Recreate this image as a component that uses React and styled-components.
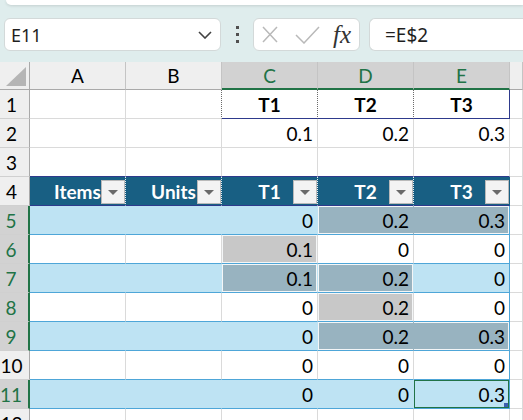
import styled, { createGlobalStyle } from "styled-components";

const Global = createGlobalStyle`
  html, body {
    margin: 0;
    height: 420px;
    overflow: hidden;
    background: #ffffff;
  }
`;

const GREEN = "#217346";
const NAVY = "#2e3a8c";
const BAND = "#bee3f3";
const TABLE_LINE = "#4ea6d8";
const HEAD = "#185f83";
const GRAY = "#c8c8c8";
const SLATE = "#98b3c0";
const GRID = "#dadada";

const Toolbar = styled.div`
  height: 62px;
  background: #dfeded;
  display: flex;
  flex-direction: column;
  box-sizing: border-box;
`;

const TopStrip = styled.div`
  height: 5px;
  margin-left: 6px;
  background: #ffffff;
  border-bottom-left-radius: 6px;
  box-shadow: 0 1px 3px rgba(0, 0, 0, 0.12);
`;

const FormulaRow = styled.div`
  display: flex;
  align-items: center;
  margin-top: 13px;
  height: 33px;
  padding-left: 4px;
  font-family: "Noto Sans", "Open Sans", sans-serif;
`;

const Box = styled.div`
  box-sizing: border-box;
  height: 33px;
  background: #ffffff;
  border: 1px solid #d3d9d9;
  border-radius: 6px;
  display: flex;
  align-items: center;
`;

const NameBox = styled(Box)`
  width: 217px;
  padding: 0 8px 0 6px;
  justify-content: space-between;
  font-size: 18px;
  color: #1f1f1f;
`;

const Dots = styled.div`
  width: 32px;
  display: flex;
  flex-direction: column;
  align-items: center;
  gap: 4px;

  span {
    width: 3px;
    height: 3px;
    background: #505050;
  }
`;

const FxBox = styled(Box)`
  width: 107px;
  margin-right: 9px;
  padding-left: 8px;
  gap: 17px;
`;

const Fx = styled.span`
  font-family: "Liberation Serif", "DejaVu Serif", serif;
  font-style: italic;
  font-size: 25px;
  color: #333333;
  margin-left: -4px;
  line-height: 1;
`;

const FormulaBox = styled(Box)`
  flex: 1;
  border-right: none;
  border-top-right-radius: 0;
  border-bottom-right-radius: 0;
  padding-left: 15px;
  font-size: 19px;
  color: #1f1f1f;
`;

const Sheet = styled.div`
  font-family: Lato, "Noto Sans", sans-serif;
  font-size: 19px;
`;

const Row = styled.div`
  display: grid;
  grid-template-columns: 30px repeat(5, 96px) 1fr;
  height: ${(p) => (p.$head ? 28 : 29)}px;
`;

const Corner = styled.div`
  box-sizing: border-box;
  background: #efefef;
  border-right: 1px solid #a9a9a9;
  border-bottom: 1px solid #a9a9a9;
  position: relative;

  &::after {
    content: "";
    position: absolute;
    right: 3px;
    bottom: 3px;
    border-left: 20px solid transparent;
    border-bottom: 19px solid #b5b5b5;
  }
`;

const ColHead = styled.div`
  box-sizing: border-box;
  background: ${(p) => (p.$on ? "#d2d2d2" : "#efefef")};
  color: ${(p) => (p.$on ? GREEN : "#000000")};
  border-right: 1px solid #c4c4c4;
  border-bottom: ${(p) => (p.$on ? `2px solid ${GREEN}` : "1px solid #a9a9a9")};
  display: flex;
  align-items: center;
  justify-content: center;
`;

const RowHead = styled.div`
  box-sizing: border-box;
  background: ${(p) => (p.$on ? "#d2d2d2" : "#efefef")};
  color: ${(p) => (p.$on ? GREEN : "#000000")};
  border-right: ${(p) => (p.$on ? `2px solid ${GREEN}` : "1px solid #a9a9a9")};
  border-bottom: 1px solid #d0d0d0;
  display: flex;
  align-items: center;
  justify-content: center;
  padding-right: 6px;
`;

const Cell = styled.div`
  box-sizing: border-box;
  position: relative;
  overflow: hidden;
  white-space: nowrap;
  background: ${(p) => p.$bg || "#ffffff"};
  border-right: 1px ${(p) => p.$rs || "solid"} ${(p) => p.$r || GRID};
  border-bottom: 1px solid ${(p) => p.$b || GRID};
  box-shadow: ${(p) => p.$ring || "none"};
  color: ${(p) => (p.$white ? "#ffffff" : "#000000")};
  font-weight: ${(p) => (p.$bold ? 700 : 400)};
  display: flex;
  align-items: center;
  justify-content: ${(p) => (p.$center ? "center" : "flex-end")};
  padding: 0 4px;
`;

const Filter = styled.div`
  position: absolute;
  top: 3px;
  right: 0;
  width: 24px;
  height: 24px;
  box-sizing: border-box;
  background: #f3f3f3;
  border: 1px solid #b9b9b9;
  display: flex;
  align-items: center;
  justify-content: center;

  &::after {
    content: "";
    border-left: 5px solid transparent;
    border-right: 5px solid transparent;
    border-top: 5px solid #6a6a6a;
  }
`;

const Handle = styled.div`
  position: absolute;
  right: 1px;
  bottom: 1px;
  width: 4px;
  height: 4px;
  background: #3d5fae;
`;

const W = "#f4f6f7";
const ring = {
  all: `inset 0 0 0 1px ${W}`,
  left: `inset 1px 0 0 ${W}, inset 0 1px 0 ${W}, inset 0 -1px 0 ${W}`,
  right: `inset -1px 0 0 ${W}, inset 0 1px 0 ${W}, inset 0 -1px 0 ${W}`,
  active: `inset 0 0 0 1px ${GREEN}`,
};

// table body: [value C, D, E] and shading for each row 5..11
const body = [
  { n: 5, band: true, v: ["0", "0.2", "0.3"], s: [null, ["slate", "left"], ["slate", "right"]] },
  { n: 6, v: ["0.1", "0", "0"], s: [["gray", "all"], null, null] },
  { n: 7, band: true, v: ["0.1", "0.2", "0"], s: [["slate", "all"], ["slate", "all"], null] },
  { n: 8, v: ["0", "0.2", "0"], s: [null, ["gray", "all"], null] },
  { n: 9, band: true, v: ["0", "0.2", "0.3"], s: [null, ["slate", "left"], ["slate", "right"]] },
  { n: 10, v: ["0", "0", "0"], s: [null, null, null], off: true },
  { n: 11, band: true, v: ["0", "0", "0.3"], s: [null, null, "active"] },
];

const Chevron = () => (
  <svg width="14" height="8" viewBox="0 0 14 8">
    <polyline points="1,1 7,7 13,1" fill="none" stroke="#424242" strokeWidth="1.6" />
  </svg>
);

const Cross = () => (
  <svg width="16" height="17" viewBox="0 0 16 17">
    <path d="M1 1 L15 16 M15 1 L1 16" stroke="#b9b9b9" strokeWidth="1.5" fill="none" />
  </svg>
);

const Check = () => (
  <svg width="25" height="18" viewBox="0 0 25 18">
    <polyline points="1,9 9,17 24,1" fill="none" stroke="#b9b9b9" strokeWidth="1.5" />
  </svg>
);

function BodyRow({ r }) {
  const bg = r.band ? BAND : "#ffffff";
  const side = r.band ? BAND : GRID;
  return (
    <Row>
      <RowHead $on={!r.off}>{r.n}</RowHead>
      <Cell $bg={bg} $r={side} $b={TABLE_LINE} />
      <Cell $bg={bg} $r={side} $b={TABLE_LINE} />
      {r.v.map((val, i) => {
        const s = r.s[i];
        let cellBg = bg;
        let shadow;
        if (s === "active") shadow = ring.active;
        else if (s) {
          cellBg = s[0] === "gray" ? GRAY : SLATE;
          shadow = ring[s[1]];
        }
        const right = i === 2 ? TABLE_LINE : s && s[1] === "left" ? cellBg : side;
        return (
          <Cell key={i} $bg={cellBg} $ring={shadow} $r={right} $b={TABLE_LINE}>
            {val}
            {s === "active" && <Handle />}
          </Cell>
        );
      })}
      <Cell />
    </Row>
  );
}

export default function App() {
  return (
    <>
      <Global />
      <Toolbar>
        <TopStrip />
        <FormulaRow>
          <NameBox>
            <span>E11</span>
            <Chevron />
          </NameBox>
          <Dots>
            <span />
            <span />
            <span />
          </Dots>
          <FxBox>
            <Cross />
            <Check />
            <Fx>fx</Fx>
          </FxBox>
          <FormulaBox>=E$2</FormulaBox>
        </FormulaRow>
      </Toolbar>

      <Sheet>
        <Row $head>
          <Corner />
          <ColHead>A</ColHead>
          <ColHead>B</ColHead>
          <ColHead $on>C</ColHead>
          <ColHead $on>D</ColHead>
          <ColHead $on>E</ColHead>
          <ColHead />
        </Row>

        <Row>
          <RowHead>1</RowHead>
          <Cell />
          <Cell $r="#6b6b6b" $rs="dotted" />
          <Cell $bold $center $r="#6b6b6b" $rs="dotted" $b={NAVY}>T1</Cell>
          <Cell $bold $center $r="#6b6b6b" $rs="dotted" $b={NAVY}>T2</Cell>
          <Cell $bold $center $r={NAVY} $b={NAVY}>T3</Cell>
          <Cell />
        </Row>

        <Row>
          <RowHead>2</RowHead>
          <Cell />
          <Cell />
          <Cell>0.1</Cell>
          <Cell>0.2</Cell>
          <Cell>0.3</Cell>
          <Cell />
        </Row>

        <Row>
          <RowHead>3</RowHead>
          <Cell $b={NAVY} />
          <Cell $b={NAVY} />
          <Cell $b={NAVY} />
          <Cell $b={NAVY} />
          <Cell $b={NAVY} />
          <Cell />
        </Row>

        <Row>
          <RowHead>4</RowHead>
          {["Items", "Units", "T1", "T2", "T3"].map((t, i) => (
            <Cell
              key={t}
              $bg={HEAD}
              $white
              $bold
              $center
              $r={i === 4 ? HEAD : "#e8eef2"}
              $rs={i === 4 ? "solid" : "dotted"}
              $b={NAVY}
            >
              {t}
              <Filter />
            </Cell>
          ))}
          <Cell />
        </Row>

        {body.map((r) => (
          <BodyRow key={r.n} r={r} />
        ))}

        <Row>
          <RowHead>12</RowHead>
          <Cell />
          <Cell />
          <Cell />
          <Cell />
          <Cell />
          <Cell />
        </Row>
      </Sheet>
    </>
  );
}
